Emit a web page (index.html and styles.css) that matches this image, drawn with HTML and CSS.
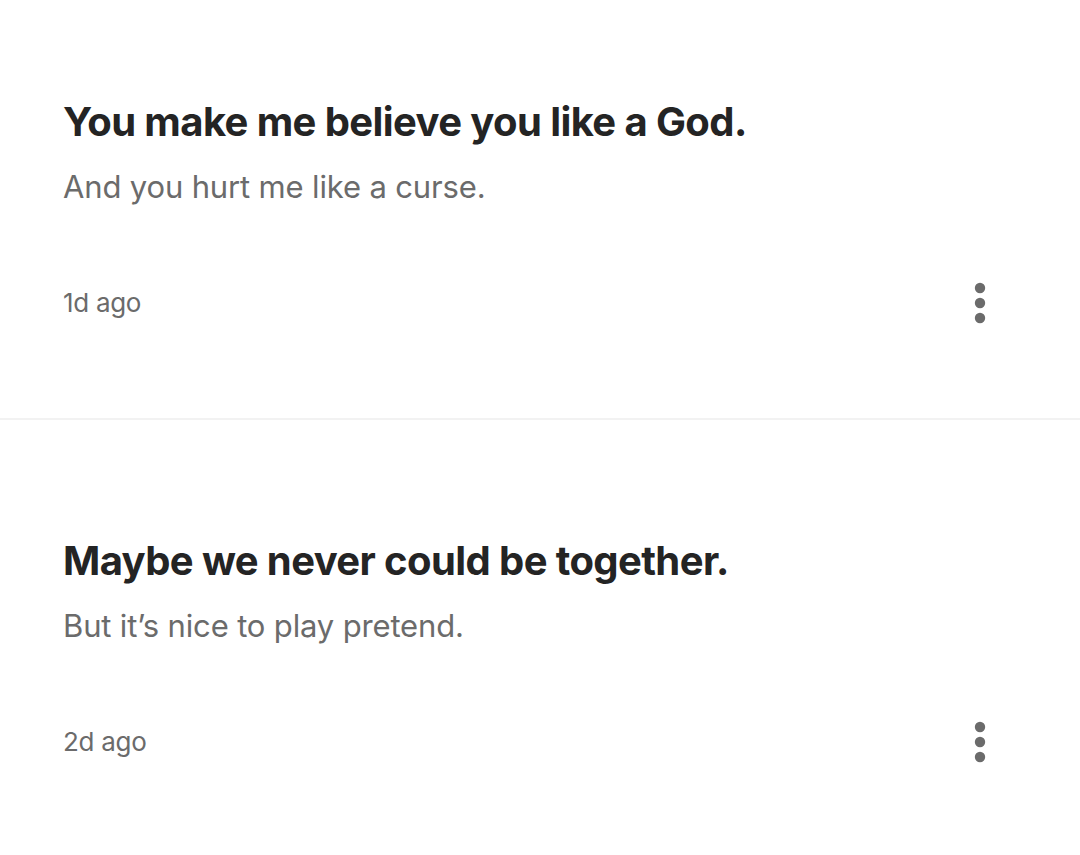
FILE: index.html
```html
<!DOCTYPE html>
<html>
<head>
<meta charset="utf-8">
<link rel="stylesheet" href="styles.css">
</head>
<body>
<div class="list">
  <article class="story">
    <h2 class="title">You make me believe you like a God.</h2>
    <p class="subtitle">And you hurt me like a curse.</p>
    <div class="meta">
      <span class="date">1d ago</span>
      <button class="more" aria-label="More">
        <svg width="12" height="42" viewBox="0 0 12 42"><circle cx="6" cy="6" r="5.2" fill="#6b6b6b"/><circle cx="6" cy="21" r="5.2" fill="#6b6b6b"/><circle cx="6" cy="36" r="5.2" fill="#6b6b6b"/></svg>
      </button>
    </div>
  </article>
  <article class="story">
    <h2 class="title">Maybe we never could be together.</h2>
    <p class="subtitle">But it’s nice to play pretend.</p>
    <div class="meta">
      <span class="date">2d ago</span>
      <button class="more" aria-label="More">
        <svg width="12" height="42" viewBox="0 0 12 42"><circle cx="6" cy="6" r="5.2" fill="#6b6b6b"/><circle cx="6" cy="21" r="5.2" fill="#6b6b6b"/><circle cx="6" cy="36" r="5.2" fill="#6b6b6b"/></svg>
      </button>
    </div>
  </article>
</div>
</body>
</html>
```
FILE: styles.css
```css
html, body {
  margin: 0;
  padding: 0;
  background: #fff;
}
body {
  font-family: Inter, "Liberation Sans", sans-serif;
  color: #242424;
}
.story {
  padding: 115px 94px 94px 63px;
  border-bottom: 2px solid #f2f2f2;
}
.story:first-child {
  padding-top: 96px;
}
.title {
  margin: 0;
  font-size: 40px;
  line-height: 52px;
  font-weight: 700;
  letter-spacing: -0.6px;
  color: #242424;
}
.subtitle {
  margin: 19px 0 0;
  font-size: 31px;
  line-height: 40px;
  font-weight: 400;
  letter-spacing: -0.15px;
  color: #6b6b6b;
}
.meta {
  margin-top: 75px;
  display: flex;
  align-items: center;
  justify-content: space-between;
}
.date {
  font-size: 26px;
  line-height: 40px;
  color: #6b6b6b;
  letter-spacing: -0.3px;
}
.more {
  border: 0;
  background: none;
  padding: 0;
  display: flex;
}
```
